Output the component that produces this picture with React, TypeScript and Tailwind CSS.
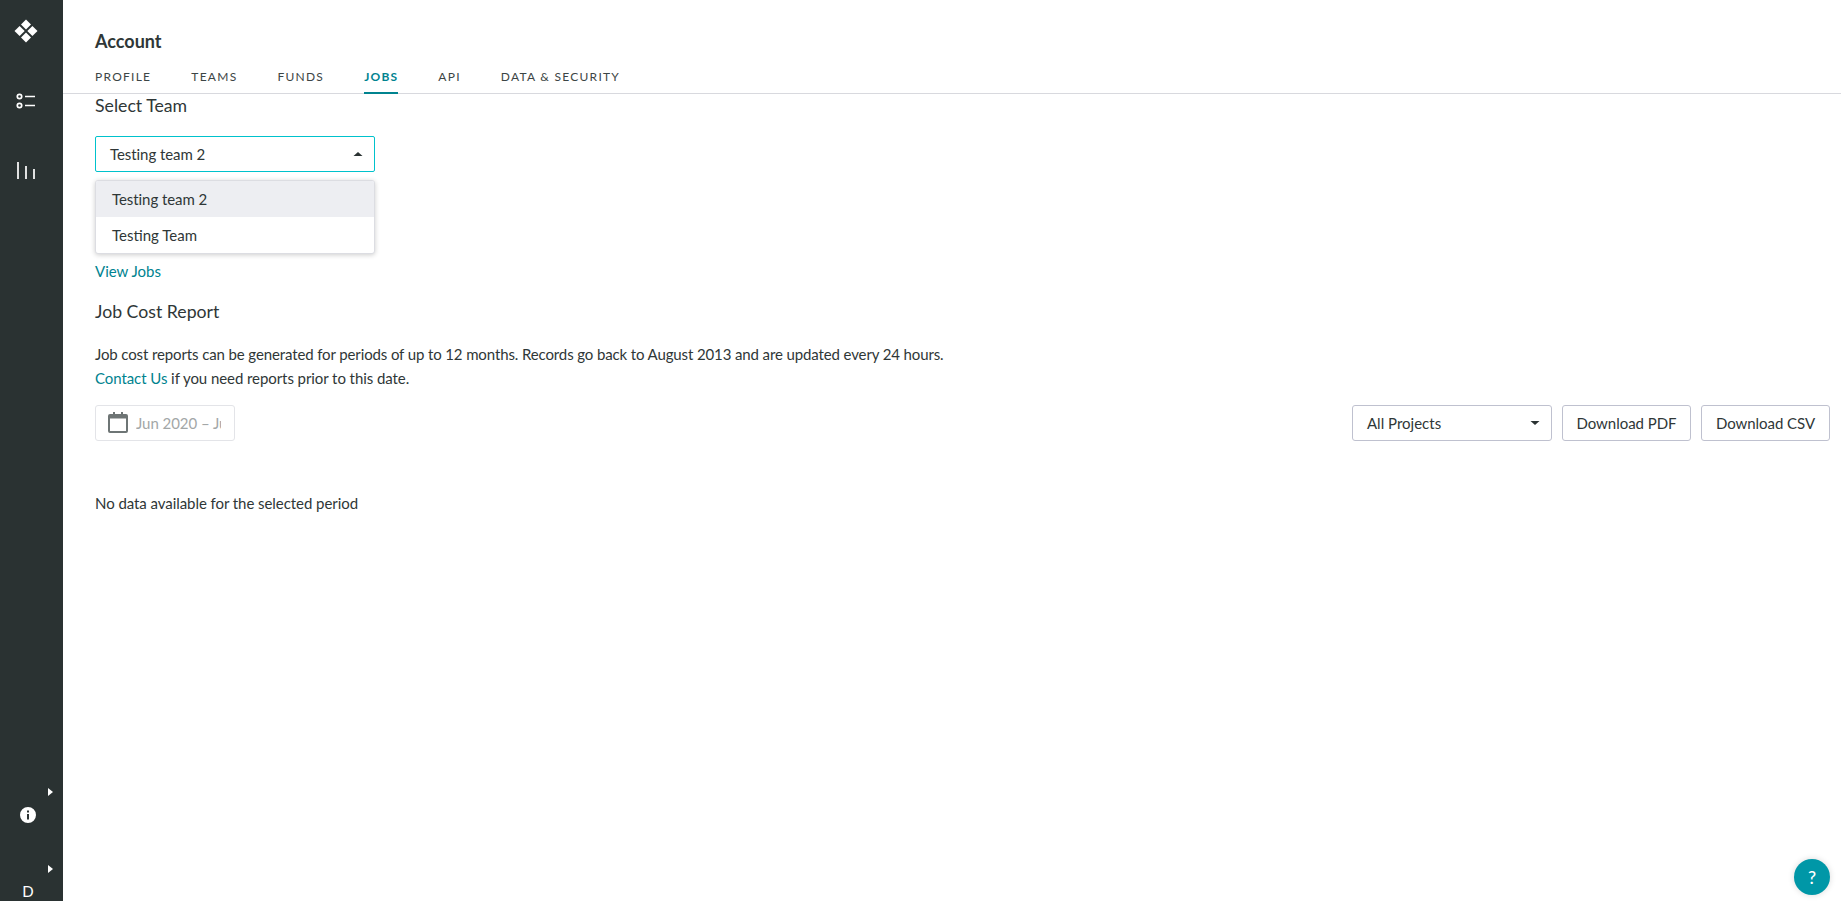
import React from 'react';

const tabs = ['PROFILE', 'TEAMS', 'FUNDS', 'JOBS', 'API', 'DATA & SECURITY'];

const Caret = ({ up = false }: { up?: boolean }) => (
  <svg width="10" height="6" viewBox="0 0 10 6" className="fill-[#2a3232]">
    <path d={up ? 'M5 1 9.5 5H.5Z' : 'M.5 1h9L5 5Z'} />
  </svg>
);

const App: React.FC = () => {
  return (
    <div className="flex h-[901px] w-[1841px] overflow-hidden bg-white font-['Lato',sans-serif] text-[15px] text-[#2f3737]">
      <aside className="flex w-[63px] shrink-0 flex-col items-center bg-[#2a3232] pr-[11px] text-white">
        <svg width="24" height="24" viewBox="0 0 24 24" className="mt-[19px] fill-white">
          <path d="M12 .5 17 5.5 12 10.5 7 5.5Z" />
          <path d="M.5 12 5.6 6.9 10.7 12 5.6 17.1Z" />
          <path d="M23.5 12 18.4 6.9 13.3 12 18.4 17.1Z" />
          <path d="M12 13.5 17 18.5 12 23.5 7 18.5Z" />
        </svg>
        <svg width="20" height="16" viewBox="0 0 20 16" className="mt-[50px] fill-none stroke-white stroke-[1.7]">
          <circle cx="3.5" cy="3.5" r="2.2" />
          <circle cx="3.5" cy="12.5" r="2.2" />
          <path d="M9 3.5h10M9 12.5h10" />
        </svg>
        <svg width="20" height="19" viewBox="0 0 20 19" className="mt-[52px] fill-none stroke-white stroke-[1.7]">
          <path d="M2 1v17M10 5v13M18 8v10" />
        </svg>
        <div className="mt-auto flex w-full flex-col items-center">
          <svg width="5" height="8" viewBox="0 0 5 8" className="ml-[48px] fill-white">
            <path d="M0 0 5 4 0 8Z" />
          </svg>
          <svg width="16" height="16" viewBox="0 0 16 16" className="mt-[11px] ml-[4px] fill-white">
            <path fillRule="evenodd" d="M8 0a8 8 0 1 1 0 16A8 8 0 0 1 8 0ZM7 3.5h2v2H7ZM7 7h2v5.5H7Z" />
          </svg>
          <svg width="5" height="8" viewBox="0 0 5 8" className="mt-[42px] ml-[48px] fill-white">
            <path d="M0 0 5 4 0 8Z" />
          </svg>
          <div className="mt-[9px] mb-[1px] ml-[4px] text-[15px] leading-[18px]">D</div>
        </div>
      </aside>

      <div className="relative flex min-w-0 flex-1 flex-col">
        <header className="border-b border-[#d8d9de] px-[32px]">
          <h1 className="pt-[29px] text-[18px] leading-[24px] font-bold">Account</h1>
          <nav className="mt-[15px] flex gap-[40px]">
            {tabs.map((tab) => (
              <div
                key={tab}
                className={
                  tab === 'JOBS'
                    ? 'mb-[-1px] border-b-2 border-[#00838f] pb-[6px] text-[12px] leading-[18px] font-bold tracking-[1.22px] text-[#00838f]'
                    : 'pb-[6px] text-[12px] leading-[18px] tracking-[1.26px] text-[#3c4545]'
                }
              >
                {tab}
              </div>
            ))}
          </nav>
        </header>

        <main className="pr-[11px] pl-[32px]">
          <h2 className="pt-[1px] text-[17.7px] leading-[22px]">Select Team</h2>

          <div className="relative mt-[19px] w-[280px]">
            <div className="flex h-[36px] items-center justify-between rounded-[2px] border border-[#00c2cc] pr-[11px] pl-[14px]">
              <span className="tracking-[-0.06px]">Testing team 2</span>
              <Caret up />
            </div>
            <div className="absolute top-[44px] left-0 w-full overflow-hidden rounded-[3px] border border-[#dcdde2] bg-white shadow-[0_1px_5px_rgba(0,0,0,0.2)]">
              <div className="flex h-[36px] items-center bg-[#edeef2] px-[16px] tracking-[-0.06px]">Testing team 2</div>
              <div className="flex h-[36px] items-center px-[16px]">Testing Team</div>
            </div>
          </div>

          <a className="mt-[88px] block leading-[22px] text-[#00838f]">View Jobs</a>

          <h2 className="mt-[18px] text-[17.7px] leading-[24px]">Job Cost Report</h2>

          <p className="mt-[18px] leading-[24px]">
            <span className="tracking-[-0.12px]">
              Job cost reports can be generated for periods of up to 12 months. Records go back to August 2013 and are updated every 24 hours.
            </span>
            <br />
            <span className="tracking-[-0.07px]">
              <span className="text-[#00838f]">Contact Us</span> if you need reports prior to this date.
            </span>
          </p>

          <div className="mt-[15px] flex items-center justify-between">
            <div className="flex h-[36px] w-[140px] items-center rounded-[3px] border border-[#e3e4e8] pl-[11px]">
              <svg width="22" height="22" viewBox="0 0 22 22" className="mb-[3px] shrink-0 fill-none stroke-[#6e7575] stroke-2">
                <rect x="2" y="4" width="18" height="17" rx="1" />
                <path d="M2 6h18" strokeWidth="3" />
                <path d="M7 1v3M15 1v3" />
              </svg>
              <div className="ml-[7px] w-[85px] overflow-hidden whitespace-nowrap tracking-[-0.05px] text-[#a3a7a7]">Jun 2020 – Jun 2021</div>
            </div>

            <div className="flex items-center gap-[10px]">
              <div className="flex h-[36px] w-[200px] items-center justify-between rounded-[3px] border border-[#bfc1cf] pr-[11px] pl-[14px]">
                <span>All Projects</span>
                <Caret />
              </div>
              <button className="h-[36px] w-[129px] rounded-[3px] border border-[#bfc1cf] tracking-[-0.04px]">Download PDF</button>
              <button className="h-[36px] w-[129px] rounded-[3px] border border-[#bfc1cf] tracking-[-0.04px]">Download CSV</button>
            </div>
          </div>

          <p className="mt-[51px] leading-[22px] tracking-[-0.06px]">No data available for the selected period</p>
        </main>

        <div className="absolute right-[11px] bottom-[6px] flex h-[36px] w-[36px] items-center justify-center rounded-full bg-[#0097a7] text-[18px] font-medium text-white shadow-[0_0_6px_rgba(0,0,0,0.15)]">
          ?
        </div>
      </div>
    </div>
  );
};

export default App;
